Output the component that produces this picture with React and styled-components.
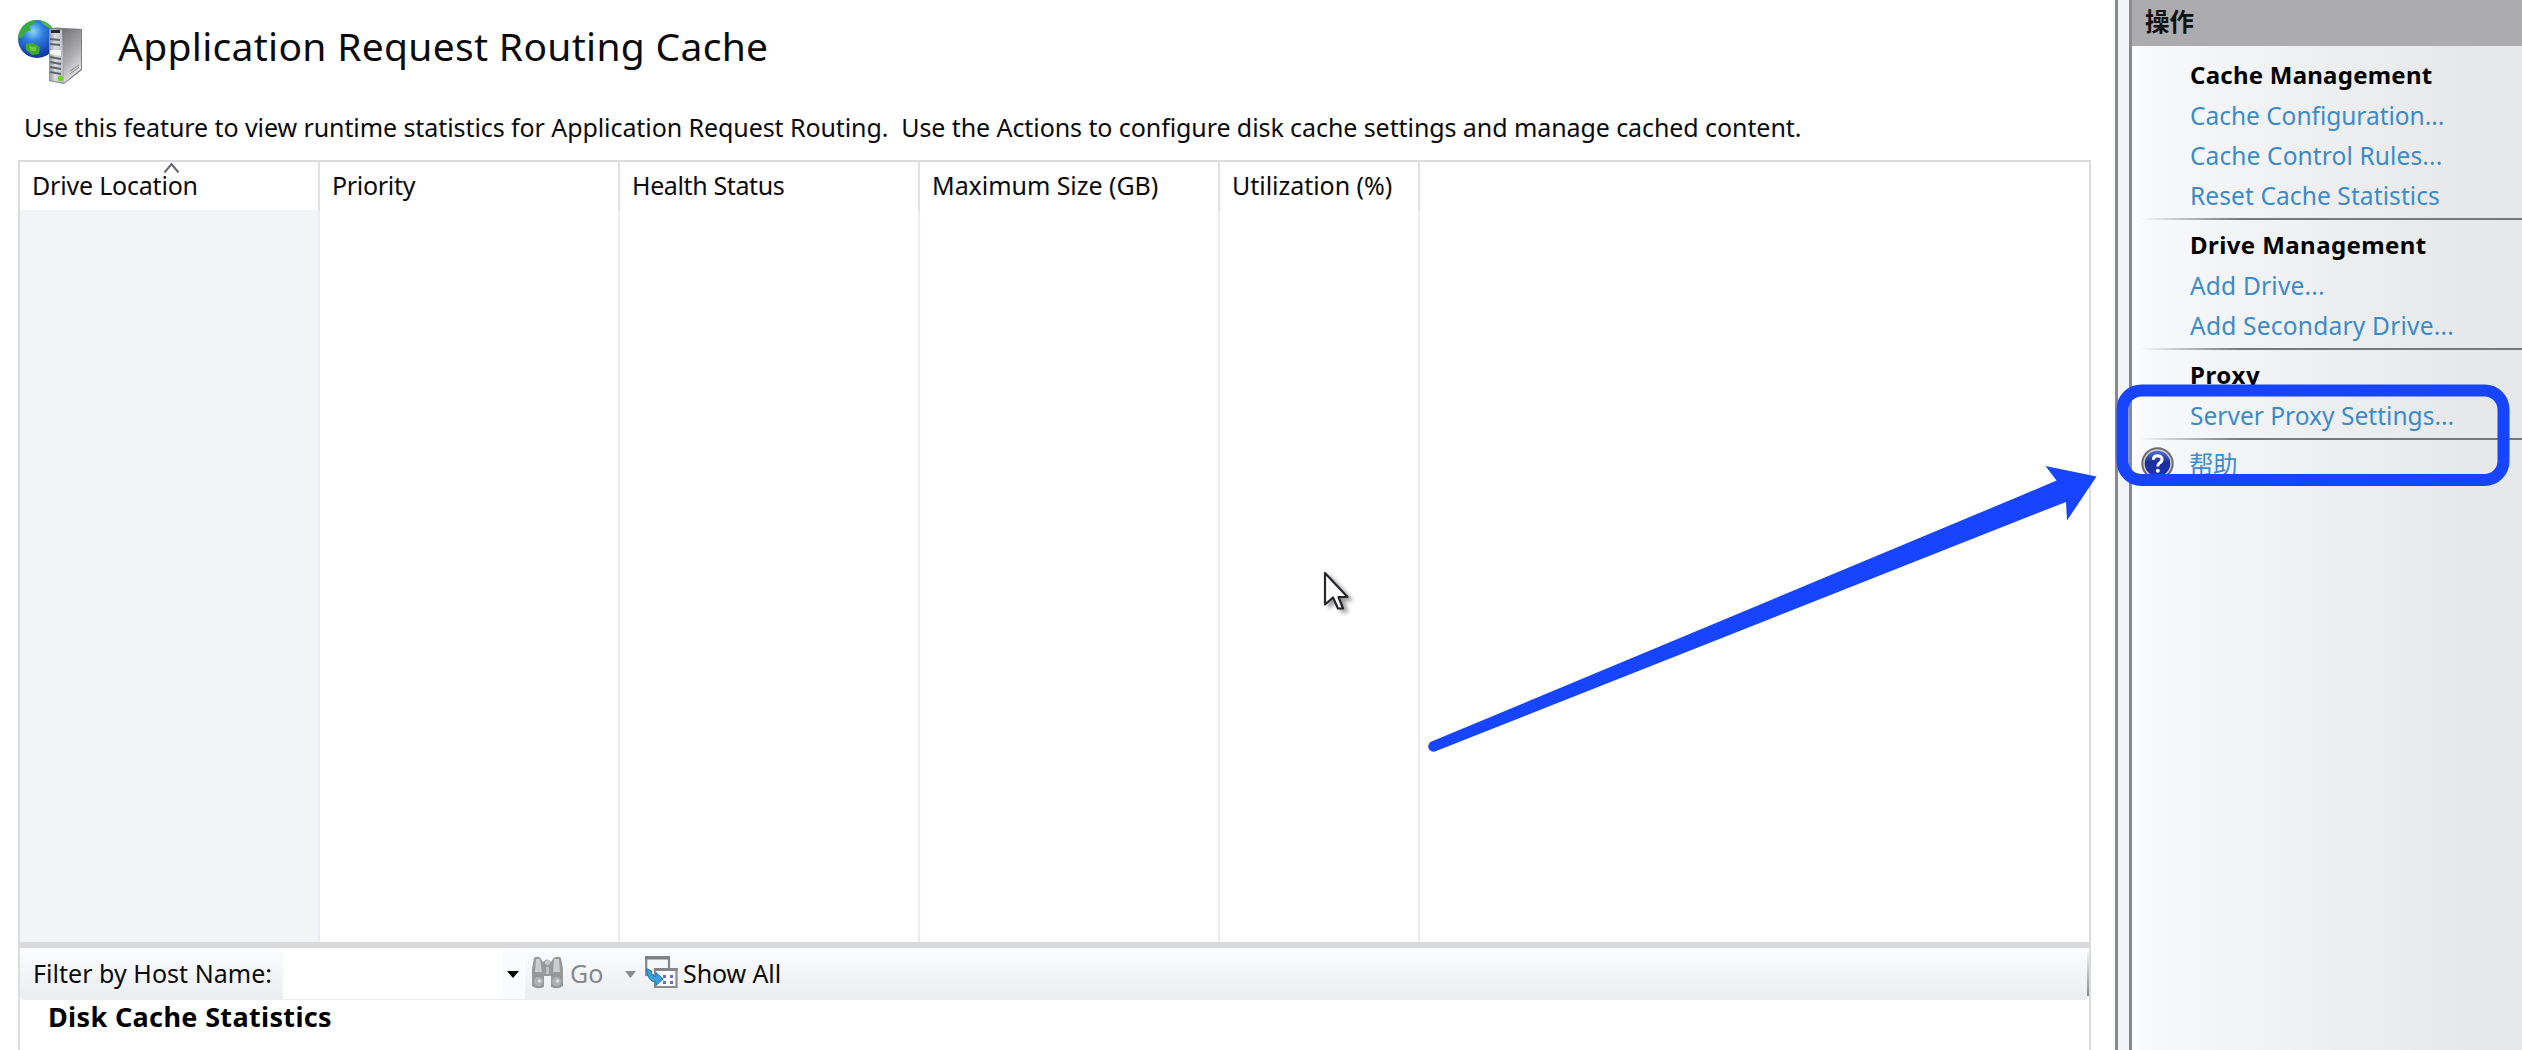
import React from "react";
import styled, { createGlobalStyle } from "styled-components";

const GlobalStyle = createGlobalStyle`
  *, *::before, *::after { box-sizing: border-box; }
  body {
    margin: 0;
    background: #fff;
    color: #0b0b0d;
    font-family: "Noto Sans", "Noto Sans CJK SC", sans-serif;
    font-size: 25px;
    overflow: hidden;
  }
`;

const Page = styled.div`
  display: flex;
  width: 2522px;
  height: 1050px;
  overflow: hidden;
`;

const Main = styled.main`
  display: flex;
  flex-direction: column;
  width: 2115px;
  padding: 0 24px 0 18px;
  flex: none;
`;

const TitleBar = styled.header`
  display: flex;
  align-items: flex-start;
  height: 106px;
  padding-top: 15px;

  svg { flex: none; margin: 0 33px 0 -3px; }
`;

const Title = styled.h1`
  margin: 0;
  font-size: 39px;
  font-weight: 400;
  line-height: 62px;
  letter-spacing: 0.3px;
`;

const Description = styled.p`
  margin: 0;
  height: 54px;
  padding-left: 6px;
  line-height: 42px;
  letter-spacing: -0.08px;
  white-space: pre;
`;

const Frame = styled.section`
  display: flex;
  flex-direction: column;
  flex: 1;
  border: 2px solid #dcdcde;
  border-bottom: 0;
`;

const Columns = styled.div`
  display: grid;
  grid-template-columns: 300px 300px 300px 300px 200px 1fr;
  height: 780px;
`;

const Column = styled.div`
  display: flex;
  flex-direction: column;
  border-right: ${(p) => (p.$last ? "0" : "2px solid #e9eef4")};
`;

const ColumnHead = styled.div`
  position: relative;
  height: 48px;
  margin-right: -2px;
  padding-left: 12px;
  border-right: ${(p) => (p.$last ? "0" : "2px solid #e0e1e4")};
  line-height: 47px;
  letter-spacing: ${(p) => p.$spacing || 0}px;
  white-space: nowrap;
`;

const ColumnBody = styled.div`
  flex: 1;
  background: ${(p) => (p.$sorted ? "#f3f4f6" : "#fff")};
`;

const SortMark = styled.svg`
  position: absolute;
  left: 143px;
  top: 0;
`;

const FilterBar = styled.div`
  display: flex;
  align-items: center;
  height: 58px;
  padding: 0 0 0 13px;
  border-top: 6px solid #d9d9db;
  background: linear-gradient(#fcfdfe, #f2f3f5 60%, #ebecee);
  border-radius: 0 0 6px 6px;
`;

const BarLabel = styled.span`
  width: ${(p) => p.$width}px;
  padding-bottom: 3px;
  line-height: 40px;
  letter-spacing: ${(p) => p.$spacing || 0}px;
  color: ${(p) => (p.$disabled ? "#86888c" : "inherit")};
  white-space: nowrap;
`;

const Combo = styled.div`
  display: flex;
  justify-content: flex-end;
  width: 242px;
  height: 50px;
  background: #fff;
`;

const ComboButton = styled.div`
  display: flex;
  align-items: center;
  justify-content: center;
  width: 22px;
  margin: 1px;
  background: #fafbfd;
`;

const BarIcon = styled.svg`
  flex: none;
  margin-left: ${(p) => p.$left || 0}px;
  margin-right: ${(p) => p.$right || 0}px;
  margin-bottom: ${(p) => p.$bottom || 0}px;
`;

const BarEnd = styled.i`
  width: 2px;
  height: 44px;
  margin-left: auto;
  background: linear-gradient(#f4f4f5, #88888a);
`;

const StatsHeading = styled.h2`
  margin: -1px 0 0;
  padding-left: 28px;
  font-size: 27px;
  line-height: 36px;
  letter-spacing: 0.35px;
  color: #000;
`;

const Splitter = styled.div`
  flex: none;
  width: 17px;
  border: solid #8a8a8d;
  border-width: 0 3px;
  background: #f2f3f6;
`;

const Actions = styled.aside`
  display: flex;
  flex-direction: column;
  flex: 1;
  background: linear-gradient(90deg, #fff 0, #f7f9fc 12px, #f0f1f3 150px, #e8e9eb 310px, #e6e7e9);
`;

const ActionsTitle = styled.div`
  height: 46px;
  margin-bottom: 4px;
  padding-left: 13px;
  background: #acabae;
  font-family: "Noto Sans CJK SC", sans-serif;
  font-size: 24.5px;
  font-weight: 700;
  line-height: 41px;
  color: #111;
`;

const Group = styled.div`
  display: flex;
  flex-direction: column;
  padding: 5px 0 3px 58px;
`;

const Divider = styled.div`
  height: 2px;
  margin-left: 8px;
  background: linear-gradient(90deg, rgba(120, 121, 124, 0), #77787b 100px);
`;

const GroupName = styled.div`
  height: 40px;
  font-size: 24px;
  font-weight: 700;
  line-height: 40px;
  letter-spacing: ${(p) => p.$spacing}px;
  color: #000;
`;

const Action = styled.a`
  height: 40px;
  font-size: 24.5px;
  line-height: 42px;
  letter-spacing: ${(p) => p.$spacing || 0}px;
  color: #3c8bc9;
  white-space: nowrap;
`;

const HelpRow = styled.div`
  display: flex;
  align-items: center;
  gap: 15px;
  height: 47px;
  padding-left: 9px;
`;

const Annotation = styled.svg`
  position: absolute;
  left: 0;
  top: 0;
  pointer-events: none;
`;

const columns = [
  { name: "Drive Location", spacing: -0.2, sorted: true },
  { name: "Priority", spacing: -0.3 },
  { name: "Health Status", spacing: -0.38 },
  { name: "Maximum Size (GB)", spacing: -0.05 },
  { name: "Utilization (%)", spacing: -0.04 },
  { name: "", last: true },
];

const groups = [
  {
    name: "Cache Management",
    spacing: 0.24,
    links: [
      ["Cache Configuration...", -0.03],
      ["Cache Control Rules...", 0.12],
      ["Reset Cache Statistics", 0.1],
    ],
  },
  {
    name: "Drive Management",
    spacing: 0.42,
    links: [
      ["Add Drive...", 0.2],
      ["Add Secondary Drive...", 0.22],
    ],
  },
  { name: "Proxy", spacing: 0.6, links: [["Server Proxy Settings...", 0.02]] },
];

function ServerIcon() {
  return (
    <svg width="70" height="74" viewBox="15 15 70 74">
      <defs>
        <radialGradient id="globe" cx="0.4" cy="0.3" r="0.75">
          <stop offset="0" stopColor="#8fd8f8" />
          <stop offset="0.35" stopColor="#2f7fe0" />
          <stop offset="1" stopColor="#0d2a9c" />
        </radialGradient>
        <linearGradient id="side" x1="0" y1="0" x2="0.4" y2="1">
          <stop offset="0" stopColor="#737376" />
          <stop offset="0.6" stopColor="#adadb0" />
          <stop offset="1" stopColor="#e4e4e6" />
        </linearGradient>
        <linearGradient id="front" x1="0" y1="0" x2="1" y2="0">
          <stop offset="0" stopColor="#8f939a" />
          <stop offset="0.4" stopColor="#d9dce1" />
          <stop offset="1" stopColor="#b7bbc1" />
        </linearGradient>
        <clipPath id="globeClip"><circle cx="37" cy="39" r="19" /></clipPath>
      </defs>
      <circle cx="37" cy="39" r="19" fill="url(#globe)" />
      <g clipPath="url(#globeClip)">
        <path d="M17 38 L18 27 L27 19 L36 19 L34 24 L29 26 L31 30 L26 32 L22 38 Z" fill="#36ad3d" />
        <path d="M39 19 L52 24 L55 30 L49 28 L44 25 Z" fill="#4fbd3e" />
        <path d="M26 44 L33 43 L40 47 L39 54 L32 55 L26 50 Z" fill="#3fa92e" />
        <path d="M29 46 L36 47 L36 51 L31 51 Z" fill="#72c840" />
      </g>
      <path d="M49 29 L56 27.500 L82 29 L82 70 L64 84 L49 81 Z" fill="#7c7c80" />
      <path d="M62 30 L81 30 L81 69 L64 83 Z" fill="url(#side)" />
      <path d="M49 29 L62 30 L64 83 L49 80 Z" fill="url(#front)" />
      <path d="M51 30 H60 V33 H51 Z" fill="#2a2b2f" />
      <path d="M50 39 L60 40 M50 44 L60 45 M50 57 L61 59 M50 62 L61 64 M50 67 L61 69 M50 72 L61 74" stroke="#5f646b" strokeWidth="1.800" />
      <path d="M50 50 L61 50 L61 56 L50 54 Z" fill="#f4f5f6" />
      <path d="M70 74 L79 67 M70 71 L79 65" stroke="#858588" strokeWidth="1" />
      <circle cx="60.500" cy="78.500" r="2.800" fill="#67d51e" />
    </svg>
  );
}

function Binoculars() {
  return (
    <BarIcon $left={6} $right={6} $bottom={4} width="33" height="33" viewBox="0 0 33 33">
      <path d="M3 2 Q6 -0.500 9.500 2 L12 6 Q16.500 1 20 6 L22.500 2 Q27 -0.500 30 2 L32 13 V30 Q27 34 20 31 V20 H13 V31 Q6 34 1 30 V13 Z" fill="#97989a" />
      <path d="M5 3 H9 L11 16 H4 Z M23 3 H28 L29 16 H22 Z" fill="#cbccce" />
      <circle cx="16.500" cy="6.500" r="2.500" fill="#c6c7c9" />
      <path d="M15 11 H18 V18 H15 Z" fill="#c0c1c3" />
      <circle cx="7.500" cy="25.500" r="4.500" fill="#b0b1b3" />
      <circle cx="25.500" cy="25.500" r="4.500" fill="#b0b1b3" />
      <circle cx="8.500" cy="25" r="1.800" fill="#dcdcde" />
      <circle cx="26.500" cy="25" r="1.800" fill="#dcdcde" />
    </BarIcon>
  );
}

function ShowAllIcon() {
  return (
    <BarIcon $left={9} $right={5} $bottom={4} width="33" height="33" viewBox="0 0 33 33">
      <path d="M1.200 1 H24 V19 H1.200 Z" fill="#f6f7f9" stroke="#85868a" strokeWidth="2.200" />
      <path d="M0 2 H25" stroke="#7e7f82" strokeWidth="3" />
      <path d="M10 13 H31.500 V31 H10 Z" fill="#fbfbfd" stroke="#8b8c90" strokeWidth="2.200" />
      <path d="M9 13.500 H32.500" stroke="#85868a" strokeWidth="3" />
      <path d="M18 19 H21 V22 H18 Z M25 19 H28 V22 H25 Z M18 25 H21 V28 H18 Z M25 25 H28 V28 H25 Z" fill="#6b6ec4" />
      <path d="M1.500 12.500 L6.500 15 Q6 20 11 20.500 V16.500 L18 23 L11 29.500 V26 Q2 25.500 1.500 12.500 Z" fill="#3aa0dc" stroke="#2179b5" strokeWidth="1" />
    </BarIcon>
  );
}

function HelpIcon() {
  return (
    <svg width="33" height="33" viewBox="0 0 33 33">
      <defs>
        <linearGradient id="help" x1="0" y1="0" x2="0" y2="1">
          <stop offset="0" stopColor="#5370cf" />
          <stop offset="0.45" stopColor="#1b2f9c" />
          <stop offset="1" stopColor="#1c34b4" />
        </linearGradient>
      </defs>
      <circle cx="16.500" cy="16.500" r="15.200" fill="#d0d1d4" stroke="#6d6d71" strokeWidth="2" />
      <circle cx="16.500" cy="16.500" r="12.800" fill="url(#help)" />
      <path d="M12.300 12.800 Q12.500 8.800 16.800 8.800 Q21.200 9 21 12.600 Q20.800 15 18.300 16.200 Q16.800 17 16.800 19.500" fill="none" stroke="#fff" strokeWidth="3" />
      <circle cx="16.800" cy="23.800" r="2" fill="#fff" />
    </svg>
  );
}

export default function App() {
  return (
    <>
      <GlobalStyle />
      <Page>
        <Main>
          <TitleBar>
            <ServerIcon />
            <Title>Application Request Routing Cache</Title>
          </TitleBar>
          <Description>
            {"Use this feature to view runtime statistics for Application Request Routing.  Use the Actions to configure disk cache settings and manage cached content."}
          </Description>
          <Frame>
            <Columns>
              {columns.map((c) => (
                <Column key={c.name} $last={c.last}>
                  <ColumnHead $last={c.last} $spacing={c.spacing}>
                    {c.name}
                    {c.sorted && (
                      <SortMark width="18" height="12" viewBox="0 0 18 12">
                        <path d="M1.500 10.500 L8.500 2 L15.500 10.500" fill="none" stroke="#67686b" strokeWidth="2" />
                      </SortMark>
                    )}
                  </ColumnHead>
                  <ColumnBody $sorted={c.sorted} />
                </Column>
              ))}
            </Columns>
            <FilterBar>
              <BarLabel $width={250} $spacing={0.04}>Filter by Host Name:</BarLabel>
              <Combo>
                <ComboButton>
                  <svg width="12" height="7" viewBox="0 0 12 7"><path d="M0 0 H12 L6 7 Z" fill="#000" /></svg>
                </ComboButton>
              </Combo>
              <Binoculars />
              <BarLabel $width={55} $disabled>Go</BarLabel>
              <BarIcon width="11" height="7" viewBox="0 0 11 7"><path d="M0 0 H11 L5.500 7 Z" fill="#8b8c8f" /></BarIcon>
              <ShowAllIcon />
              <BarLabel $width={110} $spacing={-0.1}>Show All</BarLabel>
              <BarEnd />
            </FilterBar>
            <StatsHeading>Disk Cache Statistics</StatsHeading>
          </Frame>
        </Main>
        <Splitter />
        <Actions>
          <ActionsTitle>操作</ActionsTitle>
          {groups.map((g) => (
            <React.Fragment key={g.name}>
              <Group>
                <GroupName $spacing={g.spacing}>{g.name}</GroupName>
                {g.links.map(([label, spacing]) => (
                  <Action key={label} $spacing={spacing}>{label}</Action>
                ))}
              </Group>
              <Divider />
            </React.Fragment>
          ))}
          <HelpRow>
            <HelpIcon />
            <Action $spacing={-0.5}>帮助</Action>
          </HelpRow>
        </Actions>
      </Page>
      <Annotation width="2522" height="1050" viewBox="0 0 2522 1050">
        <defs>
          <filter id="pointerShadow" x="-50%" y="-50%" width="200%" height="200%">
            <feDropShadow dx="4" dy="3" stdDeviation="2" floodColor="#000" floodOpacity="0.400" />
          </filter>
        </defs>
        <path
          d="M1325 573 V604.500 L1333 597.500 L1338 608.500 H1343 L1338.500 597 H1347.500 Z"
          fill="#fff"
          stroke="#25262b"
          strokeWidth="2.200"
          strokeLinejoin="round"
          filter="url(#pointerShadow)"
        />
        <path
          d="M1431.500 741.600 L2020 496 L2056.500 480.500 L2045.500 466 L2096.500 476.500 L2067 520.500 L2066 502 L2020 520 L1435.500 751.300 A5.200 5.200 0 0 1 1431.500 741.600 Z"
          fill="#1644ff"
        />
        <rect x="2122.500" y="390.500" width="381" height="89.500" rx="19" fill="none" stroke="#1644ff" strokeWidth="12" />
      </Annotation>
    </>
  );
}
